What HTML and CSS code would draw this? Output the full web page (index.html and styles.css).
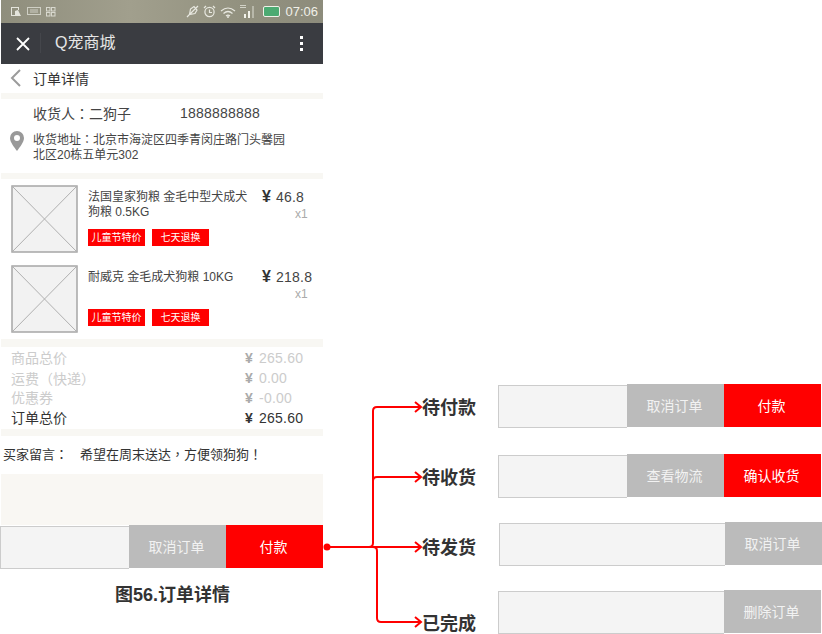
FILE: index.html
```html
<!DOCTYPE html>
<html lang="zh-CN">
<head>
<meta charset="utf-8">
<title>订单详情</title>
<link rel="stylesheet" href="styles.css">
</head>
<body>
<div class="page">
  <main class="phone">
    <div class="status">
      <div class="status-left">
        <svg width="12" height="11" viewBox="0 0 12 11"><path d="M1 1h8v3H8V2H2v7h4v1H1z M5 5l3-1 3 6H5z" fill="#e4e4dc"/></svg>
        <svg width="14" height="9" viewBox="0 0 14 9" fill="none" stroke="#cfcfc4"><rect x=".5" y=".5" width="13" height="7"/><path d="M3 3h8M3 5h8"/></svg>
        <svg width="10" height="10" viewBox="0 0 10 10" fill="none" stroke="#d8d8ce"><rect x=".5" y=".5" width="3.5" height="3.5"/><rect x="5.5" y=".5" width="3.5" height="3.5"/><rect x=".5" y="5.5" width="3.5" height="3.5"/><rect x="5.5" y="5.5" width="3.5" height="3.5"/></svg>
      </div>
      <div class="status-right">
        <svg width="13" height="13" viewBox="0 0 13 13" fill="none" stroke="#e8e8e0" stroke-width="1.2"><path d="M1 12 12 1M3.500 9.500 4.500 4 8 1.500 11 5 9 8.500z"/></svg>
        <svg width="13" height="13" viewBox="0 0 13 13" fill="none" stroke="#e8e8e0" stroke-width="1.2"><circle cx="6.5" cy="7" r="4.6"/><path d="M6.500 4.500V7.500H9M1 3 3 1M12 3l-2-2"/></svg>
        <svg width="16" height="12" viewBox="0 0 16 12" fill="none" stroke="#e8e8e0" stroke-width="1.2"><path d="M1 5q7-6 14 0M3.500 7.500q4.500-4 9 0M6 10q2-1.800 4 0"/><path d="M7 11h2" stroke-width="1.600"/></svg>
        <svg width="16" height="15" viewBox="0 0 16 15"><path d="M4 14h2v-4H4zM8 14h2V7H8z" fill="#f2f2ea"/><path d="M12 14h2V2h-2z" fill="#b8b8aa"/><path d="M0 1h6v.8H0zM0 3h6v.8H0z" fill="#e8e8e0"/></svg>
        <div class="battery"></div>
        <span class="clock">07:06</span>
      </div>
    </div>

    <div class="nav">
      <svg class="nav-close" width="16" height="16" viewBox="0 0 16 16" stroke="#fff" stroke-width="1.800"><path d="M2 2 14 14M14 2 2 14"/></svg>
      <div class="nav-title">Q宠商城</div>
      <div class="nav-more"><i></i><i></i><i></i></div>
    </div>

    <div class="subhead">
      <svg width="11" height="18" viewBox="0 0 11 18" fill="none" stroke="#9b9b9b" stroke-width="2"><path d="M10 1 2 9l8 8"/></svg>
      <span>订单详情</span>
    </div>
    <div class="strip"></div>

    <section class="address">
      <div class="receiver"><span class="receiver-name">收货人<span class="cp">&#xFF1A;</span>二狗子</span><span class="num">1888888888</span></div>
      <div class="addr-row">
        <svg class="pin" width="14" height="20" viewBox="0 0 14 20"><path fill-rule="evenodd" d="M7 0a7 7 0 0 1 7 7c0 4-4 9-7 13C4 16 0 11 0 7a7 7 0 0 1 7-7zm0 4a3 3 0 1 0 0 6 3 3 0 0 0 0-6z" fill="#999"/></svg>
        <p>收货地址<span class="cp">&#xFF1A;</span>北京市海淀区四季青闵庄路门头馨园<br>北区20栋五单元302</p>
      </div>
    </section>
    <div class="strip"></div>

    <section class="goods">
      <article class="item">
        <svg class="thumb" width="67" height="68" viewBox="0 0 67 68"><rect x="1" y="1" width="65" height="66" fill="#f2f2f2" stroke="#a6a6a6" stroke-width="1.500"/><path d="M1 1l65 66M66 1 1 67" stroke="#b0b0b0" fill="none"/></svg>
        <div class="item-info">
          <div class="item-name">法国皇家狗粮 金毛中型犬成犬狗粮 0.5KG</div>
          <div class="tags"><span class="tag">儿童节特价</span><span class="tag">七天退换</span></div>
        </div>
        <div class="item-price">
          <div class="price"><b>¥</b><span class="num">46.8</span></div>
          <div class="qty">x1</div>
        </div>
      </article>
      <article class="item">
        <svg class="thumb" width="67" height="68" viewBox="0 0 67 68"><rect x="1" y="1" width="65" height="66" fill="#f2f2f2" stroke="#a6a6a6" stroke-width="1.500"/><path d="M1 1l65 66M66 1 1 67" stroke="#b0b0b0" fill="none"/></svg>
        <div class="item-info">
          <div class="item-name">耐威克 金毛成犬狗粮 10KG</div>
          <div class="tags"><span class="tag">儿童节特价</span><span class="tag">七天退换</span></div>
        </div>
        <div class="item-price">
          <div class="price"><b>¥</b><span class="num">218.8</span></div>
          <div class="qty">x1</div>
        </div>
      </article>
    </section>
    <div class="strip strip-goods"></div>

    <section class="totals">
      <div class="total-row"><span>商品总价</span><span class="amount num"><b>¥</b>265.60</span></div>
      <div class="total-row"><span>运费<span class="cp">&#xFF08;</span>快递<span class="cp">&#xFF09;</span></span><span class="amount num"><b>¥</b>0.00</span></div>
      <div class="total-row"><span>优惠券</span><span class="amount num"><b>¥</b>-0.00</span></div>
      <div class="total-row total-final"><span>订单总价</span><span class="amount num"><b>¥</b>265.60</span></div>
    </section>
    <div class="strip strip-tall"></div>

    <div class="message"><span class="message-label">买家留言<span class="cp">&#xFF1A;</span></span><span>希望在周末送达<span class="cp">&#xFF0C;</span>方便领狗狗<span class="cp">&#xFF01;</span></span></div>
    <div class="filler"></div>

    <div class="actionbar">
      <div class="actionbar-fill"></div>
      <div class="btn btn-gray">取消订单</div>
      <div class="btn btn-red">付款</div>
    </div>

    <h1 class="caption">图56.订单详情</h1>
  </main>

  <aside class="diagram">
    <svg class="connectors" width="110" height="240" viewBox="320 400 110 240" fill="none" stroke="#f00" stroke-width="2">
      <circle cx="327" cy="547" r="3.500" fill="#f00" stroke="none"/>
      <path d="M327 547H369q4 0 4-4V411q0-4 4-4h43"/>
      <path d="M373 481q0-4 4-4h43"/>
      <path d="M369 547h51"/>
      <path d="M373 547q4 0 4 4v67q0 4 4 4h39"/>
      <path d="M415 402l6 5-6 5M415 472l6 5-6 5M415 542l6 5-6 5M415 617l6 5-6 5"/>
    </svg>

    <div class="state state-1">待付款</div>
    <div class="state state-2">待收货</div>
    <div class="state state-3">待发货</div>
    <div class="state state-4">已完成</div>

    <div class="actionbar row row-1">
      <div class="actionbar-fill"></div>
      <div class="btn btn-gray">取消订单</div>
      <div class="btn btn-red">付款</div>
    </div>
    <div class="actionbar row row-2">
      <div class="actionbar-fill"></div>
      <div class="btn btn-gray">查看物流</div>
      <div class="btn btn-red">确认收货</div>
    </div>
    <div class="actionbar row row-3">
      <div class="actionbar-fill"></div>
      <div class="btn btn-gray">取消订单</div>
    </div>
    <div class="actionbar row row-4">
      <div class="actionbar-fill"></div>
      <div class="btn btn-gray">删除订单</div>
    </div>
  </aside>
</div>
</body>
</html>
```
FILE: styles.css
```css
* { box-sizing: border-box; }
html, body { margin: 0; padding: 0; background: #fff; }
body {
  font-family: "Liberation Sans", "Noto Sans CJK SC", sans-serif;
  font-size: 14px;
  color: #333;
  overflow: hidden;
}
.page { position: relative; width: 822px; height: 634px; overflow: hidden; }
.phone { width: 323px; }
.cp { font-family: "Noto Sans CJK TC", sans-serif; font-feature-settings: "locl" 0; }
.num { letter-spacing: .22px; }

.status {
  height: 23px;
  margin-left: 1px;
  display: flex;
  justify-content: space-between;
  align-items: center;
  padding: 0 5px 0 9px;
  background: linear-gradient(90deg, #8f8e7d, #a19f8d 40%, #92917f 75%, #8d8c7c);
}
.status-left, .status-right { display: flex; align-items: center; }
.status-left { gap: 5px; }
.status-right { gap: 4px; }
.battery {
  width: 17px; height: 11px; margin-left: 3px;
  border: 1.500px solid #f0f0e8; border-radius: 2px; background: #4caa72;
}
.clock { font-size: 13px; color: #f0f0e8; margin-left: 1px; }

.nav {
  height: 41px;
  margin-left: 1px;
  display: flex;
  align-items: center;
  background: #3a3c41;
  color: #e6e6e6;
  padding-left: 14px;
}
.nav-close { flex: none; }
.nav-title {
  margin-left: 9px;
  padding-left: 14px;
  font-size: 16px;
  line-height: 16px;
  border-left: 1px solid #44464b;
  height: 20px;
  display: flex;
  align-items: center;
  margin-top: -1px;
}
.nav-more { margin-left: auto; margin-right: 20px; display: flex; flex-direction: column; gap: 3px; }
.nav-more i { display: block; width: 3px; height: 3px; background: #fff; }

.subhead {
  height: 29px;
  margin-left: 1px;
  display: flex;
  align-items: center;
  gap: 12px;
  padding-left: 9px;
  padding-bottom: 1px;
  color: #333;
}
.strip { height: 6px; margin-left: 1px; background: #f8f7f3; }
.strip-goods { height: 8px; }
.strip-tall { height: 7px; }

.address { height: 74px; margin-left: 1px; padding-left: 32px; }
.receiver { padding-top: 5px; line-height: 18px; display: flex; color: #444; }
.receiver-name { width: 147px; }
.addr-row { margin-top: 8px; position: relative; }
.addr-row p { margin: 0; font-size: 12px; line-height: 15px; color: #444; }
.pin { position: absolute; left: -23px; top: 0; }

.goods { height: 160px; margin-left: 1px; padding: 6px 0 0 10px; }
.item { display: flex; height: 68px; margin-bottom: 12px; }
.thumb { flex: none; }
.item-info {
  width: 164px;
  margin-left: 10px;
  display: flex;
  flex-direction: column;
  justify-content: space-between;
  padding-top: 5px;
  padding-bottom: 7px;
}
.item-name { font-size: 12px; line-height: 15px; color: #444; }
.tags { display: flex; gap: 7px; }
.tag {
  width: 57px; height: 17px;
  background: #f00; color: #fff;
  font-size: 10px; line-height: 17px; text-align: center;
}
.item-price { margin-left: 10px; padding-top: 2px; width: 60px; }
.price { font-size: 14px; line-height: 20px; color: #444; display: flex; align-items: baseline; }
.price b { width: 14px; font-size: 16px; color: #333; }
.qty { font-size: 12px; line-height: 14px; color: #aaa; padding-left: 33px; }

.totals { height: 82px; margin-left: 1px; padding: 1px 0 0 10px; }
.total-row { display: flex; height: 20px; line-height: 20px; color: #ccc; }
.total-row > span:first-child { width: 234px; }
.amount b { display: inline-block; width: 14px; color: #aaa; }
.total-final { color: #333; }
.total-final .amount b { color: #333; }

.message {
  height: 38px; margin-left: 1px; padding-left: 2px;
  display: flex; align-items: center;
  font-size: 13px; color: #333;
  padding-bottom: 3px;
}
.message-label { width: 77px; }
.filler { height: 51px; margin-left: 1px; background: #f9f7f3; }

.actionbar { display: flex; height: 44px; width: 323px; }
.actionbar-fill {
  flex: 1;
  margin-top: 1px;
  background: #f4f4f4;
  border: 1px solid #ccc;
  border-right: 0;
}
.btn {
  width: 97px; height: 43px;
  display: flex; align-items: center; justify-content: center;
  padding: 0 2px 2px 0;
  color: #fff;
  font-size: 14px;
}
.btn-gray { background: #bbb; color: #f2f2f2; }
.btn-red { background: #f00; }

.caption {
  margin: 15px 0 0;
  text-align: center;
  font-size: 18px;
  line-height: 22px;
  font-weight: 700;
  color: #333;
  width: 345px;
}

.connectors { position: absolute; left: 320px; top: 400px; }
.state {
  position: absolute; left: 422px;
  font-size: 18px; line-height: 24px; font-weight: 700; color: #333;
}
.state-1 { top: 396px; }
.state-2 { top: 466px; }
.state-3 { top: 536px; }
.state-4 { top: 612px; }
.row { position: absolute; left: 498px; }
.row-1 { top: 384px; }
.row-2 { top: 454px; }
.row-3 { top: 522px; left: 499px; }
.row-4 { top: 590px; }
```
